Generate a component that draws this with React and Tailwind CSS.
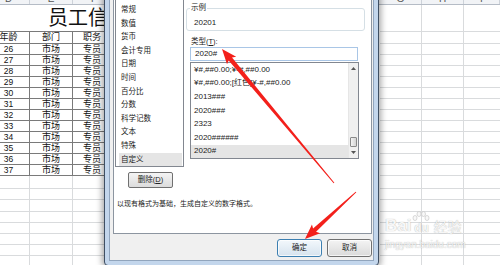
import React from 'react';

const COLS = ['w-[42px]', 'w-[43px]', 'w-[43px]', 'w-[264px]', 'w-[42px]', 'w-[42px]', 'w-[36px]'];
const DARK = 'border-[#7a7a7a]';
const LIGHT = 'border-[#d9dbdd]';

function HeaderStrip() {
  const letters = ['D', 'E', 'F', '', 'G', 'H', 'I'];
  return (
    <div className="flex h-[5px] bg-[#f1f3f6] border-b border-[#b5bcc6]">
      {letters.map((l, i) => (
        <div key={i} className={`${COLS[i]} shrink-0 ${i === 3 ? '' : 'border-r border-[#cdd2d9]'} flex justify-center overflow-hidden`}>
          <span className="text-[10px] leading-[10px] -mt-[6px] text-[#555]">{l}</span>
        </div>
      ))}
    </div>
  );
}

function RightCells() {
  return (
    <>
      <div className="w-[264px] shrink-0" />
      <div className={`w-[42px] shrink-0 border-r border-b ${LIGHT}`} />
      <div className={`w-[42px] shrink-0 border-r border-b ${LIGHT}`} />
      <div className={`w-[36px] shrink-0 border-b ${LIGHT}`} />
    </>
  );
}

function DataRow({ a, b, c, h = 'h-[11px]', dark = true, text = 'text-[9px]' }) {
  const bc = dark ? DARK : LIGHT;
  return (
    <div className={`flex ${h}`}>
      <div className={`w-[42px] shrink-0 border-r border-b ${bc} flex items-center justify-center ${text} leading-none text-[#111]`}>{a}</div>
      <div className={`w-[43px] shrink-0 border-r border-b ${bc} flex items-center justify-center text-[9px] leading-none text-[#111]`}>{b}</div>
      <div className={`w-[43px] shrink-0 border-r border-b ${bc} flex items-center justify-center text-[9px] leading-none text-[#111] pr-[4px]`}>{c}</div>
      <RightCells />
    </div>
  );
}

function Sheet() {
  const nums = [26, 27, 28, 29, 30, 31, 32, 33, 34, 35, 36, 37];
  const empties = ['h-[13px]', 'h-[11px]', 'h-[12px]', 'h-[11px]', 'h-[11px]', 'h-[11px]', 'h-[11px]', 'h-[11px]'];
  return (
    <div className="-ml-[12px] flex flex-col">
      <HeaderStrip />
      <div className="flex h-[27px]">
        <div className={`w-[128px] shrink-0 border-b ${DARK} flex items-center pl-[60px] overflow-hidden`}>
          <span className="text-[20px] leading-none whitespace-nowrap text-[#111]">员工信息表</span>
        </div>
        <RightCells />
      </div>
      <DataRow a="年龄" b="部门" c="职务" h="h-[12px]" />
      {nums.map((n) => (
        <DataRow key={n} a={n} b="市场" c="专员" text="text-[8.5px]" />
      ))}
      {empties.map((h, i) => (
        <DataRow key={i} h={h} dark={false} />
      ))}
    </div>
  );
}

function U({ children }) {
  return <span className="underline underline-offset-1">{children}</span>;
}

function Dialog() {
  const cats = ['常规', '数值', '货币', '会计专用', '日期', '时间', '百分比', '分数', '科学记数', '文本', '特殊', '自定义'];
  const fmts = ['¥#,##0.00;¥-#,##0.00', '¥#,##0.00;[红色]¥-#,##0.00', '2013###', '2020###', '2323', '2020######', '2020#'];
  return (
    <div className="absolute left-[104px] top-[-6px] w-[275px] h-[272px] rounded-[4px] border border-[#3f4f63] bg-[#c3d6ec] p-[4px] shadow-[0_0_6px_2px_rgba(0,0,0,0.35)]">
      <div className="h-full border border-[#91a5bd] bg-[#f0f0f0] flex flex-col">
        <div className="-mt-[10px] ml-[3px] mr-[1px] h-[244px] shrink-0 border border-[#8c95a0] bg-white flex flex-col">
          <div className="flex items-start">
            <div className="ml-[1px] mt-[7px] w-[69px] h-[169px] shrink-0 border border-[#828790] bg-white pt-[4px] pl-[3px] pr-[1px] overflow-hidden">
              {cats.map((c, i) => (
                <div key={c} className={`h-[13.6px] flex items-center pl-[2px] text-[7.5px] leading-none text-[#222] ${i === cats.length - 1 ? 'bg-[#e5e5e5]' : ''}`}>{c}</div>
              ))}
            </div>
            <div className="ml-[2px] w-[179px] shrink-0 flex flex-col">
              <div className="relative mt-[17px] h-[23px] border border-[#d5dfe5] rounded-[3px] pl-[7px] pt-[9px]">
                <span className="absolute left-[3px] -top-[6px] px-[1px] bg-white text-[7.5px] leading-[10px] text-[#222]">示例</span>
                <div className="text-[8px] leading-[10px] text-[#222]">20201</div>
              </div>
              <div className="mt-[6px] ml-[5px] text-[7.5px] leading-[10px] text-[#222]">类型(<U>T</U>):</div>
              <div className="ml-[4px] w-[168px] h-[14px] border border-[#a9c6e6] bg-white pl-[4px] flex items-center text-[8px] leading-none text-[#222]">2020#</div>
              <div className="mt-[1px] ml-[4px] w-[169px] h-[97px] border border-[#828790] bg-white flex overflow-hidden">
                <div className="flex-1 min-w-0 flex flex-col">
                  {fmts.map((f, i) => (
                    <div key={f} className={`h-[13.6px] shrink-0 flex items-center pl-[3px] text-[8px] leading-none whitespace-nowrap text-[#222] ${i === fmts.length - 1 ? 'bg-[#e5e5e5]' : ''}`}>{f}</div>
                  ))}
                </div>
                <div className="w-[10px] shrink-0 flex flex-col bg-[#f0f0f0] border-l border-[#e6e6e6]">
                  <div className="h-[11px] flex items-center justify-center">
                    <svg width="5" height="3" viewBox="0 0 5 3"><path d="M0 3 L2.5 0 L5 3 Z" fill="#555" /></svg>
                  </div>
                  <div className="flex-1 flex flex-col justify-end px-[1px]">
                    <div className="h-[10px] border border-[#8a8a8a] rounded-[1px] bg-linear-to-r from-[#f4f4f4] to-[#d4d4d4]" />
                  </div>
                  <div className="h-[11px] flex items-center justify-center">
                    <svg width="5" height="3" viewBox="0 0 5 3"><path d="M0 0 L2.5 3 L5 0 Z" fill="#555" /></svg>
                  </div>
                </div>
              </div>
            </div>
          </div>
          <div className="mt-[5px] ml-[14px] w-[45px] h-[16px] rounded-[2px] border border-[#707070] bg-linear-to-b from-[#f4f4f4] to-[#dcdcdc] flex items-center justify-center text-[7.5px] leading-none text-[#222]">
            删除(<U>D</U>)
          </div>
          <div className="mt-[11px] ml-[3px] text-[7px] leading-[10px] whitespace-nowrap text-[#222]">以现有格式为基础，生成自定义的数字格式。</div>
        </div>
        <div className="mt-[5px] mr-[1px] flex justify-end gap-[5px]">
          <div className="w-[45px] h-[18px] rounded-[3px] border border-[#3c7fb1] bg-linear-to-b from-[#f3f8fc] to-[#d6e3ee] shadow-[inset_0_0_0_1px_rgba(255,255,255,0.7)] flex items-center justify-center text-[7.5px] leading-none text-[#222]">确定</div>
          <div className="w-[45px] h-[18px] rounded-[3px] border border-[#707070] bg-linear-to-b from-[#f4f4f4] to-[#dadada] shadow-[inset_0_0_0_1px_rgba(255,255,255,0.7)] flex items-center justify-center text-[7.5px] leading-none text-[#222]">取消</div>
        </div>
      </div>
    </div>
  );
}

function arrow(tip, tail, headLen, headHalf, w0, w1) {
  const dx = tail[0] - tip[0];
  const dy = tail[1] - tip[1];
  const L = Math.hypot(dx, dy);
  const ux = dx / L, uy = dy / L;
  const nx = -uy, ny = ux;
  const bx = tip[0] + ux * headLen, by = tip[1] + uy * headLen;
  const cx = tip[0] + ux * (headLen - 2), cy = tip[1] + uy * (headLen - 2);
  const pts = [
    [tip[0], tip[1]],
    [bx + nx * headHalf, by + ny * headHalf],
    [cx + nx * w0, cy + ny * w0],
    [tail[0] + nx * w1, tail[1] + ny * w1],
    [tail[0] - nx * w1, tail[1] - ny * w1],
    [cx - nx * w0, cy - ny * w0],
    [bx - nx * headHalf, by - ny * headHalf],
  ];
  return pts.map((p) => p.map((v) => v.toFixed(2)).join(',')).join(' ');
}

function Arrows() {
  return (
    <svg className="absolute inset-0 pointer-events-none" width="500" height="265" viewBox="0 0 500 265">
      <polygon points={arrow([222, 49], [334, 183], 15, 6, 2.2, 0.5)} fill="#f3201b" />
      <polygon points={arrow([305, 239], [356, 192], 15, 6, 2.2, 0.5)} fill="#f3201b" />
    </svg>
  );
}

function Watermark() {
  const ts = '[text-shadow:0_0_1px_rgba(0,0,0,0.35)]';
  return (
    <div className="absolute left-[385px] top-[211px] flex flex-col items-start pointer-events-none">
      <div className="flex items-end">
        <span className={`text-[17px] leading-none font-bold text-[#f7f7f7] ${ts}`}>Bai</span>
        <div className="flex flex-col items-center ml-[1px]">
          <svg width="18" height="11" viewBox="0 0 18 11">
            <g fill="#f8f8f8" stroke="#c8c8c8" strokeWidth="0.7">
              <ellipse cx="3" cy="7" rx="2" ry="2.5" />
              <ellipse cx="7" cy="3" rx="2" ry="2.5" />
              <ellipse cx="11.5" cy="3" rx="2" ry="2.5" />
              <ellipse cx="15" cy="7" rx="2" ry="2.5" />
            </g>
          </svg>
          <span className={`text-[12px] leading-none font-bold text-[#f7f7f7] ${ts}`}>du</span>
        </div>
        <span className={`ml-[3px] text-[14px] leading-none text-[#f7f7f7] ${ts}`}>经验</span>
      </div>
      <span className={`mt-[6px] text-[10px] leading-none text-[#f7f7f7] ${ts}`}>jingyan.baidu.com</span>
    </div>
  );
}

export default function App() {
  return (
    <div className="relative w-[500px] h-[265px] overflow-hidden bg-white font-['Liberation_Sans','Noto_Sans_CJK_SC',sans-serif]">
      <Sheet />
      <Dialog />
      <Arrows />
      <Watermark />
    </div>
  );
}
